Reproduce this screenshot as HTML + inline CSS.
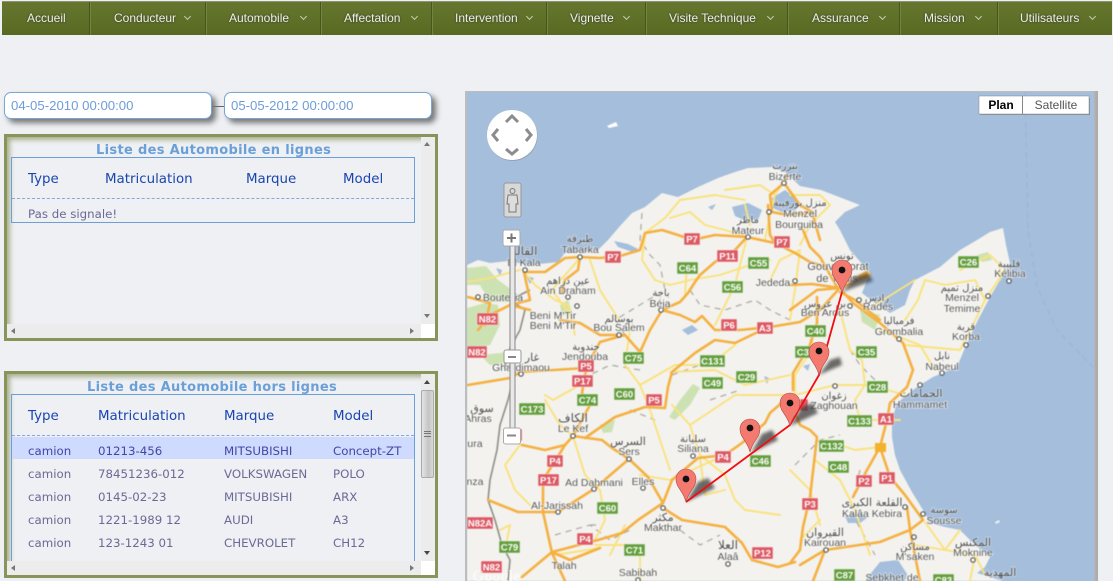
<!DOCTYPE html>
<html><head><meta charset="utf-8"><style>
html,body{margin:0;padding:0;width:1113px;height:581px;overflow:hidden;background:#eef0f3;font-family:"Liberation Sans",sans-serif}
.abs{position:absolute}
#nav{left:2px;top:1px;width:1110px;height:34px;background:linear-gradient(#66762f,#5f7029 50%,#586a22);border-top:1px solid #8b9470;box-sizing:border-box}
.m{position:absolute;top:9px;font-size:12px;line-height:14px;color:#eef0e2;text-shadow:0 0 2px #333;white-space:nowrap}
.sep{position:absolute;top:0;width:1px;height:33px;background:#47561c;box-shadow:1px 0 0 #75843f}
.ch{position:absolute;top:12px;width:4px;height:4px;border-right:1px solid #c6cfae;border-bottom:1px solid #c6cfae;transform:rotate(45deg) scale(1,1)}
.inp{top:92px;width:208px;height:27px;box-sizing:border-box;background:#fff;border:1px solid #7aa5d4;border-radius:7px;box-shadow:4px 4px 6px #777;font-size:13.2px;line-height:26px;color:#6d9dd8;padding-left:6px}
.panel{left:4px;width:434px;height:207px;box-sizing:border-box;border:3px solid #87955a;background:#eef0f3;box-shadow:inset 3px 3px 5px #aab08f}
.title{position:absolute;font-family:"DejaVu Sans",sans-serif;font-weight:bold;font-size:13px;letter-spacing:.32px;color:#6b9fd8;white-space:nowrap;line-height:16px}
.tb{position:absolute;left:11px;width:404px;border:1px solid #6a9fd8;box-sizing:border-box}
.h,.c{position:absolute;font-family:"DejaVu Sans",sans-serif;white-space:nowrap}
.h{font-size:13.4px;color:#1a45b0;line-height:16px}
.c{font-size:11.8px;color:#6a6a96;line-height:14px}
.dash{position:absolute;left:12px;width:402px;border-top:1px dashed #83a9dc;height:0}
.vs{position:absolute;width:14px;background:#ececec}
.hs{position:absolute;left:7px;width:414px;height:14px;background:#ececec}
.cor{position:absolute;left:421px;width:14px;height:14px;background:#fff}
.ar{position:absolute;width:0;height:0}
#map{left:467px;top:92px;width:627px;height:489px;overflow:hidden;background:#a4bedc}
#mapshadow{left:465px;top:91px;width:633px;height:490px;background:linear-gradient(90deg,#bdbdbd,#bdbdbd 99%,#a8a8a8)}
</style></head><body>
<div class="abs" id="nav">
<span class="m" style="left:25px">Accueil</span>
<div class="sep" style="left:87px"></div>
<span class="m" style="left:112px">Conducteur</span><i class="ch" style="left:183px"></i>
<div class="sep" style="left:203px"></div>
<span class="m" style="left:227px">Automobile</span><i class="ch" style="left:299px"></i>
<div class="sep" style="left:318px"></div>
<span class="m" style="left:342px">Affectation</span><i class="ch" style="left:410px"></i>
<div class="sep" style="left:429px"></div>
<span class="m" style="left:453px">Intervention</span><i class="ch" style="left:525px"></i>
<div class="sep" style="left:544px"></div>
<span class="m" style="left:568px">Vignette</span><i class="ch" style="left:622px"></i>
<div class="sep" style="left:643px"></div>
<span class="m" style="left:667px">Visite Technique</span><i class="ch" style="left:766px"></i>
<div class="sep" style="left:785px"></div>
<span class="m" style="left:810px">Assurance</span><i class="ch" style="left:878px"></i>
<div class="sep" style="left:897px"></div>
<span class="m" style="left:922px">Mission</span><i class="ch" style="left:974px"></i>
<div class="sep" style="left:995px"></div>
<span class="m" style="left:1018px">Utilisateurs</span><i class="ch" style="left:1088px"></i>
</div>

<div class="abs" style="left:212px;top:106px;width:12px;height:1px;background:#666"></div>
<div class="abs inp" style="left:4px">04-05-2010 00:00:00</div>
<div class="abs inp" style="left:224px">05-05-2012 00:00:00</div>

<!-- panel 1 -->
<div class="abs panel" style="top:134px;"></div>
<div class="vs" style="left:421px;top:137px;height:187px"></div>
<div class="ar" style="left:424px;top:142px;border:3px solid transparent;border-top:0;border-bottom:4px solid #777"></div>
<div class="ar" style="left:424px;top:314px;border:3px solid transparent;border-bottom:0;border-top:4px solid #777"></div>
<div class="hs" style="top:324px"></div>
<div class="ar" style="left:11px;top:328px;border:3px solid transparent;border-left:0;border-right:4px solid #777"></div>
<div class="ar" style="left:410px;top:328px;border:3px solid transparent;border-right:0;border-left:4px solid #777"></div>
<div class="cor" style="top:324px"></div>
<div class="title" style="left:96px;top:143px;">Liste des Automobile en lignes</div>
<div class="tb" style="top:157px;height:66px"></div>
<span class="h" style="left:28px;top:172px">Type</span>
<span class="h" style="left:105px;top:172px">Matriculation</span>
<span class="h" style="left:246px;top:172px">Marque</span>
<span class="h" style="left:343px;top:172px">Model</span>
<div class="dash" style="top:198px"></div>
<span class="c" style="left:28px;top:207px">Pas de signale!</span>

<!-- panel 2 -->
<div class="abs panel" style="top:371px;"></div>
<div class="vs" style="left:421px;top:374px;height:187px"></div>
<div class="abs" style="left:421px;top:390px;width:13px;height:88px;box-sizing:border-box;border:1px solid #aaa;border-radius:2px;background:linear-gradient(90deg,#e4e4e4,#c4c4c4 60%,#dadada)"></div>
<div class="abs" style="left:424px;top:431px;width:7px;height:6px;border-top:1px solid #777;border-bottom:1px solid #777;box-sizing:border-box"></div>
<div class="abs" style="left:424px;top:433px;width:7px;height:1px;background:#777"></div>
<div class="ar" style="left:424px;top:380px;border:3px solid transparent;border-top:0;border-bottom:4px solid #444"></div>
<div class="ar" style="left:424px;top:551px;border:3px solid transparent;border-bottom:0;border-top:4px solid #444"></div>
<div class="tb" style="top:394px;height:167px;border-bottom:0"></div>
<div class="abs" style="left:12px;top:437px;width:402px;height:22px;background:#cfdaff"></div>
<div class="hs" style="top:561px"></div>
<div class="ar" style="left:11px;top:565px;border:3px solid transparent;border-left:0;border-right:4px solid #777"></div>
<div class="ar" style="left:410px;top:565px;border:3px solid transparent;border-right:0;border-left:4px solid #777"></div>
<div class="cor" style="top:561px"></div>
<div class="title" style="left:87px;top:380px;">Liste des Automobile hors lignes</div>
<span class="h" style="left:28px;top:409px">Type</span>
<span class="h" style="left:98px;top:409px">Matriculation</span>
<span class="h" style="left:224px;top:409px">Marque</span>
<span class="h" style="left:333px;top:409px">Model</span>
<div class="dash" style="top:435px"></div>
<span class="c" style="left:28px;top:444px;color:#4545a5">camion</span><span class="c" style="left:98px;top:444px;color:#4545a5">01213-456</span><span class="c" style="left:224px;top:444px;color:#4545a5">MITSUBISHI</span><span class="c" style="left:333px;top:444px;color:#4545a5">Concept-ZT</span>
<span class="c" style="left:28px;top:467px">camion</span><span class="c" style="left:98px;top:467px">78451236-012</span><span class="c" style="left:224px;top:467px">VOLKSWAGEN</span><span class="c" style="left:333px;top:467px">POLO</span>
<span class="c" style="left:28px;top:490px">camion</span><span class="c" style="left:98px;top:490px">0145-02-23</span><span class="c" style="left:224px;top:490px">MITSUBISHI</span><span class="c" style="left:333px;top:490px">ARX</span>
<span class="c" style="left:28px;top:513px">camion</span><span class="c" style="left:98px;top:513px">1221-1989 12</span><span class="c" style="left:224px;top:513px">AUDI</span><span class="c" style="left:333px;top:513px">A3</span>
<span class="c" style="left:28px;top:536px">camion</span><span class="c" style="left:98px;top:536px">123-1243 01</span><span class="c" style="left:224px;top:536px">CHEVROLET</span><span class="c" style="left:333px;top:536px">CH12</span>

<!-- map -->
<div class="abs" id="mapshadow"></div>
<div class="abs" id="map">
<svg xmlns="http://www.w3.org/2000/svg" width="627" height="489" viewBox="467 92 627 489" style="display:block">
<style>
.o{fill:none;stroke:#f5b040;stroke-width:2.6;stroke-linejoin:round;stroke-linecap:round}
.y{fill:none;stroke:#fae27c;stroke-width:1.9;stroke-linejoin:round;stroke-linecap:round}
.b{fill:none;stroke:#a9a9a3;stroke-width:1.2;stroke-dasharray:6 5}
.l text,text.l{font-family:"Liberation Sans",sans-serif;font-size:10.5px;fill:#555;text-anchor:middle;paint-order:stroke;stroke:#fff;stroke-width:1.6px;stroke-opacity:.6}
.ar2 text{font-family:"DejaVu Sans",sans-serif;font-size:10px;fill:#4a4a4a;text-anchor:middle;paint-order:stroke;stroke:#fff;stroke-width:1.5px;stroke-opacity:.5}
.d circle{fill:#fff;stroke:#555;stroke-width:1.2}
.r rect{fill:#dc5a64;stroke:#fff;stroke-width:.4}.g rect{fill:#649f3e;stroke:#fff;stroke-width:.4}
.s text{font-family:"Liberation Sans",sans-serif;font-weight:bold;font-size:9.5px;fill:#fff;text-anchor:middle}
</style>
<g style="filter:blur(.5px)">
<!-- land -->
<path fill="#f3f2ee" d="M467,265L478,260L490,263L508,261L530,265L558,262L565,253L585,252L598,250L608,240L620,226L632,213L645,207L662,193L678,197L698,187L718,178L735,172L748,168L772,167L785,172L800,186L821,190L860,205L845,212L835,222L840,230L850,250L870,273L862,293L875,303L890,313L905,305L910,290L915,280L940,267L960,250L977,240L990,232L1003,228L1006,245L1010,263L1000,280L990,297L978,320L967,343L957,367L933,377L917,387L897,403L892,420L892,437L895,455L900,470L912,492L923,510L930,523L945,527L960,530L975,545L990,557L985,567L977,573L1003,581L467,581Z"/>
<path fill="#fff" d="M607,126L616,122L618,126L609,128Z"/>
<path fill="#eef0f0" d="M995,522l4-2l1,2l-4,2z"/>
<!-- green -->
<g fill="#cde2b2">
<path d="M467,268L486,266L498,280L512,290L510,302L490,302L480,285L467,285Z"/>
<path d="M467,308L485,303L498,305L500,325L490,345L467,350Z"/>
<path d="M560,305L568,300L572,312L562,316Z"/>
<path d="M669,417L680,400L693,384L700,388L690,405L675,420Z"/>
<path d="M600,425L615,420L612,432L603,433Z"/>
<path d="M860,310L880,315L875,330L862,322Z"/>
<path d="M977,255L988,252L992,260L982,262Z"/>
<path d="M480,355L510,352L518,362L490,365Z"/>
</g>
<!-- lakes -->
<g fill="#a4bedc">
<path d="M732,207L748,203L762,210L758,220L744,220L735,216Z"/>
<path d="M772,198L785,190L798,200L796,210L782,212L773,208Z"/>
<path d="M708,207L716,204L712,210Z"/>
<path d="M614,241L628,244L640,250L636,253L618,247Z"/>
<path d="M496,268L502,270L500,276Z"/>
<path d="M526,276L534,278L530,284Z"/>
<path d="M682,330L692,325L698,330L688,335Z"/>
<path d="M764,376L769,378L767,384Z"/>
<path d="M868,577L880,562L898,560L907,574L905,581L866,581Z"/>
<path d="M845,516L858,513L867,518L860,523L848,523Z"/>
<path d="M985,567L1005,562L1010,575L990,578Z"/>
<path d="M803,366L810,364L808,371Z"/>
</g>
<path d="M1025,92L1028,230L1037,287L1057,330L1093,367" fill="none" stroke="#9bb3db" stroke-width="1" stroke-dasharray="6 4"/>
<!-- borders -->
<path fill="none" stroke="#8e8e88" stroke-width="1.6" d="M530,290L510,300L525,310L520,330L510,348L505,365L515,372L508,400L500,425L497,450L490,480L488,500L495,520L502,545L510,560L508,581"/>
<path class="b" d="M642,213L640,240L650,255L660,265L665,290L648,300L615,320L625,335"/>
<path class="b" d="M690,290L700,305L725,310L755,300L770,310L790,320"/>
<path class="b" d="M640,370L610,365L590,375M630,410L655,420M672,375L700,365L720,365M710,400L740,390M590,525L600,525M555,535L590,525L610,540L630,530M680,530L700,545L720,535"/>
<path class="b" d="M850,350L860,365L880,385M795,465L820,440L840,435M860,470L850,510L875,555"/>
<!-- yellow roads -->
<path class="y" d="M467,282L490,278L520,270M524,272L535,285L555,300L568,305L575,335M568,312L552,290L580,258M590,260L600,290L619,320M645,235L642,260L655,280L670,285L690,280L720,275L750,265L770,260M687,265L685,295M747,237L735,285L715,325M645,233L665,218L680,200L715,195L745,200M670,218L690,212L705,225L725,230L747,237M745,205L750,225M725,190L760,185L775,195L785,180M775,195L770,215L765,240M790,195L820,195L830,205L810,225L800,245M800,250L795,290L790,320M770,280L780,260L800,250"/>
<path class="y" d="M510,430L520,445L505,465L515,490L530,505M545,395L553,400L580,385M545,400L560,425L573,436M573,436L585,475L600,490L605,520L595,540M630,330L625,365L640,385L650,410M640,385L675,365L710,365L735,345M670,372L715,370L745,385L790,375M672,405L690,425L700,455L725,475L735,500L745,510L780,515M690,425L735,395L790,395M650,410L670,470M700,458L705,495L725,490M640,475L670,480L725,455M625,525L610,555M595,545L625,545L640,555L640,581M555,555L600,548M500,530L510,525L505,550"/>
<path class="y" d="M810,340L815,345L795,375L795,395L835,385L870,385L905,395M840,310L850,350L862,360L865,385L855,400L860,420L900,420M880,330L920,345L935,370M905,345L960,350L968,335L985,300L975,280L945,285L925,280L918,300L905,320M960,270L990,255L1000,265L1000,280M985,300L1005,270M875,305L915,280M825,440L855,450L880,447M815,460L840,480L855,510L870,555M790,470L810,490L820,525M925,522L945,550L975,555L985,575M915,545L945,550L960,530M975,555L970,581M820,520L800,540"/>
<!-- orange roads -->
<path class="o" d="M524,272L545,272L565,258L580,257L600,258L620,256L640,250L645,233L662,230L678,235L692,240L715,235L747,237L775,243L795,253L810,262L820,265"/>
<path class="o" d="M580,257L578,270L565,280L562,292M468,297L490,303L485,325M478,330L490,315L510,305L530,300L524,272M510,305L530,310"/>
<path class="o" d="M747,237L735,250L715,262L700,275L695,282L688,293L680,302L662,310L680,315L695,322L702,316L715,330L740,330L770,327L800,322L820,310L838,290"/>
<path class="o" d="M662,310L650,330L640,352L625,335L600,335L580,323L560,320M625,335L600,342L590,360L586,370L582,393L590,405L573,436M468,385L510,378L521,372L586,368"/>
<path class="o" d="M573,436L565,445L545,450L522,445M573,436L602,440L612,448L629,459L648,477L663,503L638,520L622,533L598,540L552,552L522,577M585,438L615,417L645,407L665,408L668,387L672,372L695,353L715,340L735,343L762,330"/>
<path class="o" d="M629,459L594,489L558,512L518,512L488,500M543,512L543,480L555,461L565,445M543,512L552,553L565,581M552,552L570,560L600,548"/>
<path class="o" d="M663,508L682,520L725,527L742,543L752,560L778,567L795,562M663,503L672,480L698,458L725,455L742,443L765,423L770,413L785,400"/>
<path class="o" d="M790,400L800,425L810,430L817,437L810,497L803,527L800,550L790,563M825,550L880,542L910,530L923,520L905,495L890,477L880,447L887,420L890,403L907,387L913,370L903,343L880,323L853,303L843,292M880,447L867,470L853,497M910,530L907,507M910,530L920,581M825,550L813,581M825,550L800,565"/>
<path class="o" d="M790,310L817,290L840,288L870,275M803,230L810,247L820,257L837,287M790,285L812,284L840,288M817,297L817,323L810,345L793,373L793,390M840,292L855,300L880,320M787,175L784,183L800,205L812,212L820,240M784,183L770,195L772,212L782,214L795,215L812,212M768,205L770,235L775,243"/>
<path stroke="#f5b040" stroke-width="4" fill="none" d="M850,283L868,272"/>
<!-- dots -->
<g class="d">
<circle cx="784" cy="183" r="2.2"/><circle cx="769" cy="212" r="2.2"/><circle cx="748" cy="237" r="2.2"/><circle cx="580" cy="257" r="2.2"/><circle cx="525" cy="270" r="2.2"/><circle cx="478" cy="297" r="2.2"/><circle cx="568" cy="297" r="2.2"/><circle cx="577" cy="306" r="2.2"/><circle cx="661" cy="310" r="2.2"/><circle cx="619" cy="335" r="2.2"/><circle cx="521" cy="374" r="2.2"/><circle cx="586" cy="364" r="2.2"/><circle cx="573" cy="436" r="2.2"/><circle cx="629" cy="459" r="2.2"/><circle cx="693" cy="456" r="2.2"/><circle cx="643" cy="488" r="2.2"/><circle cx="594" cy="489" r="2.2"/><circle cx="558" cy="512" r="2.2"/><circle cx="663" cy="508" r="2.2"/><circle cx="728" cy="564" r="2.2"/><circle cx="638" cy="580" r="2.2"/><circle cx="795" cy="281" r="2.2"/><circle cx="859" cy="300" r="2.2"/><circle cx="850" cy="306" r="2.2"/><circle cx="899" cy="339" r="2.2"/><circle cx="1009" cy="281" r="2.2"/><circle cx="988" cy="296" r="2.2"/><circle cx="966" cy="345" r="2.2"/><circle cx="942" cy="373" r="2.2"/><circle cx="920" cy="385" r="2.2"/><circle cx="835" cy="386" r="2.2"/><circle cx="905" cy="507" r="2.2"/><circle cx="923" cy="514" r="2.2"/><circle cx="914" cy="537" r="2.2"/><circle cx="826" cy="550" r="2.2"/><circle cx="973" cy="560" r="2.2"/>
</g>
<!-- labels -->
<g class="ar2">
<text x="785" y="169" font-size="9">بنزرت</text><text x="800" y="206">منزل بورقيبة</text><text x="748" y="223">ماطر</text><text x="580" y="242">طبرقة</text><text x="524" y="255" style="font-size:12px">القالة</text><text x="568" y="284">عين دراهم</text><text x="619" y="322">بوسالم</text><text x="661" y="296">باجة</text><text x="586" y="350">جندوبة</text><text x="532" y="361" style="font-size:11px">غار</text><text x="482" y="412" style="font-size:11px">سوق</text><text x="573" y="422" style="font-size:12px">الكاف</text><text x="628" y="445" style="font-size:11px">السرس</text><text x="693" y="442">سليانة</text><text x="663" y="521" style="font-size:11px">مكثر</text><text x="728" y="549" style="font-size:12px">العلا</text><text x="842" y="259">تونس</text><text x="825" y="307">بن عروس</text><text x="877" y="301">رادس</text><text x="899" y="324">فرمباليا</text><text x="1009" y="267">قليبية</text><text x="962" y="291">منزل تميم</text><text x="966" y="330">قربة</text><text x="942" y="359">نابل</text><text x="921" y="397" style="font-size:11px">الحمامات</text><text x="834" y="399">زغوان</text><text x="944" y="513">سوسة</text><text x="872" y="506" style="font-size:11px">القلعة الكبرى</text><text x="825" y="536" style="font-size:11px">القيروان</text><text x="915" y="550">مساكن</text><text x="973" y="546" style="font-size:11px">المكنس</text><text x="1000" y="576" style="font-size:11px">المهدية</text>
</g>
<g class="l">
<text x="785" y="180">Bizerte</text><text x="800" y="217">Menzel</text><text x="799" y="228">Bourguiba</text><text x="748" y="234">Mateur</text><text x="580" y="253">Tabarka</text><text x="524" y="266">El Kala</text><text x="568" y="294">Ain Draham</text><text x="503" y="301">Bouteljia</text><text x="553" y="319">Beni M'Tir</text><text x="553" y="329">Beni M'Tir</text><text x="619" y="331">Bou Salem</text><text x="660" y="307">Béja</text><text x="773" y="286">Jededa</text><text x="585" y="360">Jendouba</text><text x="521" y="371">Ghardimaou</text><text x="478" y="422">Ahras</text><text x="475" y="447">ura</text><text x="475" y="485">nza</text><text x="573" y="432">Le Kef</text><text x="629" y="455">Sers</text><text x="693" y="452">Siliana</text><text x="594" y="486">Ad Dahmani</text><text x="643" y="485">Elles</text><text x="557" y="509">Al-Jarissah</text><text x="663" y="531">Makthar</text><text x="728" y="560">Alaâ</text><text x="564" y="569">Talah</text><text x="638" y="576">Sabibah</text><text x="838" y="270" style="font-size:11px">Gouvernorat</text><text x="837" y="282" style="font-size:11px">de Tunis</text><text x="825" y="316">Ben Arous</text><text x="878" y="310">Radès</text><text x="899" y="335">Grombalia</text><text x="1010" y="277">Kélibia</text><text x="962" y="301">Menzel</text><text x="962" y="312">Temime</text><text x="966" y="340">Korba</text><text x="942" y="370">Nabeul</text><text x="920" y="408">Hammamet</text><text x="834" y="409">Zaghouan</text><text x="944" y="524">Sousse</text><text x="872" y="517">Kalâa Kebira</text><text x="825" y="546">Kairouan</text><text x="915" y="560">M'saken</text><text x="973" y="556">Moknine</text><text x="892" y="581">Sebkhet de</text>
</g>
<!-- shields -->
<g class="s"><g class="r">
<rect x="605" y="251" width="16" height="12"/><text x="613" y="260.5">P7</text>
<rect x="684" y="233" width="16" height="12"/><text x="692" y="242.5">P7</text>
<rect x="717" y="250" width="21" height="12"/><text x="727.5" y="259.500">P11</text>
<rect x="774" y="236" width="16" height="12"/><text x="782" y="245.5">P7</text>
<rect x="477" y="313" width="21" height="12"/><text x="487.500" y="322.500">N82</text>
<rect x="721" y="319" width="16" height="12"/><text x="729" y="328.500">P6</text>
<rect x="757" y="322" width="16" height="12"/><text x="765" y="331.500">A3</text>
<rect x="467" y="346" width="20" height="12"/><text x="477" y="355.500">N82</text>
<rect x="578" y="360" width="16" height="12"/><text x="586" y="369.500">P5</text>
<rect x="572" y="375" width="21" height="12"/><text x="582.500" y="384.500">P17</text>
<rect x="646" y="394" width="16" height="12"/><text x="654" y="403.500">P5</text>
<rect x="547" y="455" width="16" height="12"/><text x="555" y="464.500">P4</text>
<rect x="538" y="474" width="21" height="12"/><text x="548.500" y="483.500">P17</text>
<rect x="715" y="451" width="16" height="12"/><text x="723" y="460.500">P4</text>
<rect x="467" y="517" width="26" height="12"/><text x="480" y="526.500">N82A</text>
<rect x="577" y="533" width="16" height="12"/><text x="585" y="542.500">P4</text>
<rect x="481" y="561" width="21" height="12"/><text x="491.500" y="570.500">N82</text>
<rect x="752" y="547" width="21" height="12"/><text x="762.500" y="556.500">P12</text>
<rect x="878" y="413" width="16" height="12"/><text x="886" y="422.500">A1</text>
<rect x="856" y="475" width="16" height="12"/><text x="864" y="484.500">P2</text>
<rect x="879" y="472" width="16" height="12"/><text x="887" y="481.500">P1</text>
<rect x="802" y="498" width="16" height="12"/><text x="810" y="507.500">P3</text>
<rect x="514" y="429" width="8" height="12"/>
<rect x="800" y="399" width="8" height="12"/>
</g><g class="g">
<rect x="677" y="262" width="21" height="12"/><text x="687.500" y="271.500">C64</text>
<rect x="748" y="257" width="21" height="12"/><text x="758.500" y="266.500">C55</text>
<rect x="722" y="281" width="21" height="12"/><text x="732.500" y="290.500">C56</text>
<rect x="623" y="352" width="21" height="12"/><text x="633.500" y="361.500">C75</text>
<rect x="700" y="355" width="25" height="12"/><text x="712.500" y="364.500">C131</text>
<rect x="736" y="371" width="21" height="12"/><text x="746.500" y="380.500">C29</text>
<rect x="702" y="377" width="21" height="12"/><text x="712.500" y="386.500">C49</text>
<rect x="614" y="388" width="21" height="12"/><text x="624.500" y="397.500">C60</text>
<rect x="577" y="394" width="21" height="12"/><text x="587.500" y="403.500">C74</text>
<rect x="519" y="403" width="26" height="12"/><text x="532" y="412.500">C173</text>
<rect x="750" y="455" width="21" height="12"/><text x="760.500" y="464.500">C46</text>
<rect x="597" y="502" width="21" height="12"/><text x="607.500" y="511.500">C60</text>
<rect x="624" y="544" width="21" height="12"/><text x="634.500" y="553.500">C71</text>
<rect x="499" y="541" width="21" height="12"/><text x="509.500" y="550.500">C79</text>
<rect x="958" y="256" width="21" height="12"/><text x="968.500" y="265.500">C26</text>
<rect x="805" y="325" width="21" height="12"/><text x="815.500" y="334.500">C40</text>
<rect x="795" y="346" width="21" height="12"/><text x="805.500" y="355.500">C37</text>
<rect x="856" y="346" width="21" height="12"/><text x="866.500" y="355.500">C35</text>
<rect x="867" y="381" width="21" height="12"/><text x="877.500" y="390.500">C28</text>
<rect x="847" y="415" width="25" height="12"/><text x="859.500" y="424.500">C133</text>
<rect x="819" y="440" width="25" height="12"/><text x="831.500" y="449.500">C132</text>
<rect x="828" y="461" width="21" height="12"/><text x="838.500" y="470.500">C48</text>
<rect x="834" y="569" width="21" height="12"/><text x="844.500" y="578.500">C87</text>
<rect x="933" y="574" width="21" height="12"/><text x="943.500" y="583.500">C83</text>
</g>
<rect x="875" y="443" width="11" height="9" fill="#f3b22c"/></g>
</g>
<!-- pin shadows -->
<g fill="#3c3c3c" opacity=".75" style="filter:blur(1.6px)">
<path d="M686,502L698,482L708,478L715,488Z"/><path d="M751,453L762,434L772,430L778,440Z"/><path d="M790,426L802,407L812,403L818,413Z"/><path d="M819,375L830,360L840,357L842,365L830,370Z"/><path d="M842,292L855,277L868,273L873,281L858,286Z"/>
</g>
<!-- polyline -->
<path d="M686,502L790,425L819,375L842,292" fill="none" stroke="#f20d12" stroke-width="1.8"/>
<!-- pins -->
<g id="pins" style="filter:blur(.3px)">
<path d="M686,502C683,490 676,488 676,479A10,10 0 1 1 696,479C696,488 689,490 686,502Z" fill="#f47a70" stroke="#b04a45" stroke-width=".6"/><circle cx="686" cy="479" r="3.400" fill="#111"/>
<path d="M750,452C747,440 740,438 740,429A10,10 0 1 1 760,429C760,438 753,440 750,452Z" fill="#f47a70" stroke="#b04a45" stroke-width=".6"/><circle cx="750" cy="428" r="3.400" fill="#111"/>
<path d="M790,426C787,414 780,412 780,403A10,10 0 1 1 800,403C800,412 793,414 790,426Z" fill="#f47a70" stroke="#b04a45" stroke-width=".6"/><circle cx="790" cy="403" r="3.400" fill="#111"/>
<path d="M819,375C816,363 809,361 809,352A10,10 0 1 1 829,352C829,361 822,363 819,375Z" fill="#f47a70" stroke="#b04a45" stroke-width=".6"/><circle cx="819" cy="351" r="3.400" fill="#111"/>
<path d="M842,293C839,281 832,279 832,270A10,10 0 1 1 852,270C852,279 845,281 842,293Z" fill="#f47a70" stroke="#b04a45" stroke-width=".6"/><circle cx="842" cy="270" r="3.400" fill="#111"/>
</g>
<text x="472" y="581" font-family="Liberation Serif,serif" font-size="16" font-weight="bold" fill="#fff" opacity=".6">Google</text>
<!-- slider -->
<rect x="510" y="246" width="5" height="182" fill="#e8e8e8" stroke="#888" stroke-width="1"/>
<rect x="504" y="350" width="17" height="13" rx="2" fill="#fff" stroke="#999"/><rect x="508" y="356" width="8" height="2" fill="#888"/>
<!-- pan -->
<circle cx="512.500" cy="136" r="25" fill="#888" opacity=".5"/>
<circle cx="512" cy="135" r="25" fill="#fff"/>
<g fill="none" stroke="#8c8c8c" stroke-width="3" stroke-linejoin="miter">
<path d="M506,122L512,116L518,122"/><path d="M506,149L512,154L518,149"/><path d="M498,129L493,135L498,141"/><path d="M526,129L531,135L526,141"/>
</g>
<!-- pegman -->
<rect x="504" y="183" width="17" height="34" rx="2" fill="#d8d8d8" stroke="#999" stroke-width="1"/>
<circle cx="512.500" cy="191" r="2.500" fill="none" stroke="#777"/>
<path d="M508,195H517L518,204H516V212H509V204H507Z" fill="#ddd" stroke="#777" stroke-width="1"/>
<!-- zoom buttons -->
<rect x="503" y="230" width="17" height="16" rx="2" fill="#fff" stroke="#aaa"/>
<path d="M507,238H516M511.500,233.500V242.500" stroke="#777" stroke-width="2"/>
<rect x="503.500" y="428" width="17" height="16" rx="2" fill="#fff" stroke="#aaa"/>
<rect x="507" y="434.500" width="9" height="2" fill="#888"/>
<!-- map type -->
<rect x="980" y="98" width="110" height="17" fill="#777" opacity=".6"/>
<rect x="979" y="96" width="110" height="18" fill="#fff" stroke="#888" stroke-width=".5"/>
<rect x="1022" y="96" width="1" height="18" fill="#888"/>
<text x="1001" y="109" font-family="Liberation Sans,sans-serif" font-weight="bold" font-size="12" fill="#000" text-anchor="middle">Plan</text>
<text x="1056" y="109" font-family="Liberation Sans,sans-serif" font-size="12" fill="#555" text-anchor="middle">Satellite</text>
</svg>
</div>
</body></html>
